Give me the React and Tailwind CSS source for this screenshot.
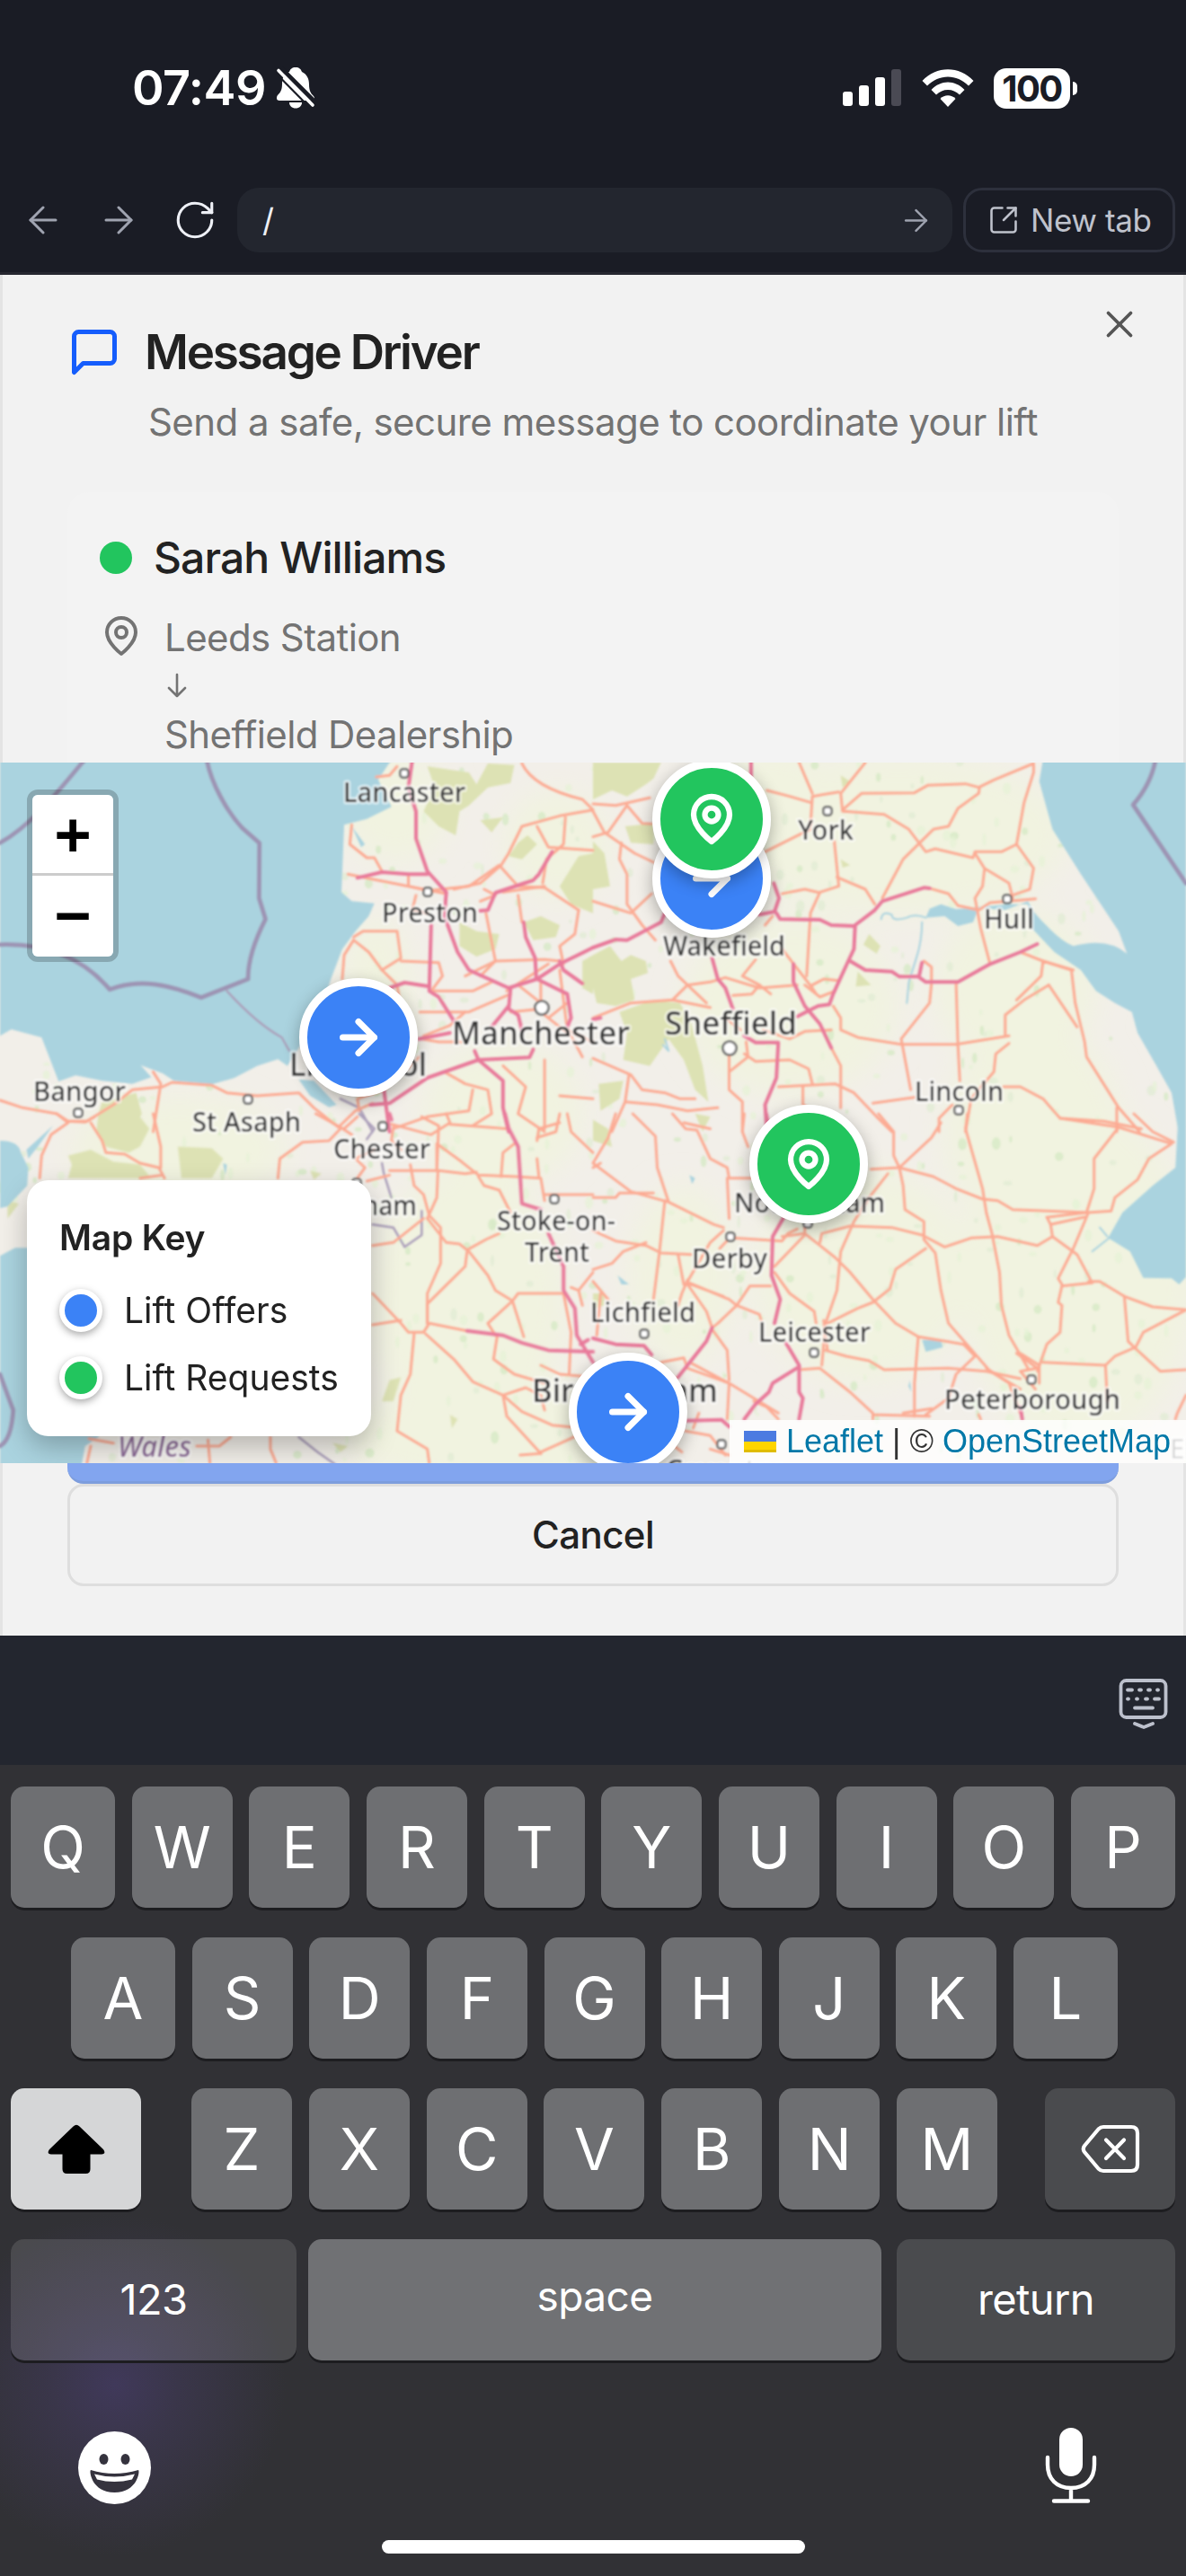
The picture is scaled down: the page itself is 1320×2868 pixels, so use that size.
import React from "react";
import { ArrowLeft, ArrowRight, RotateCw, SquareArrowOutUpRight, X } from "lucide-react";

/* ---------- map data: four sheets, each drawn on its own 1568 x 1260 grid ---------- */

const SHEETS = [
  {
    id: "nw",
    place: "translate(0 840) scale(0.42092 0.33333)",
    forest: [
      "M1130 40 L1240 60 1260 100 1290 30 1360 35 1350 95 1290 110 1240 170 1215 190 1205 270 1160 240 1120 190 1150 110Z",
      "M1395 270 L1420 300 1380 350 1345 340 1370 295Z",
      "M1215 560 L1260 590 1320 600 1310 650 1260 675 1215 640Z",
      "M1568 330 L1530 340 1480 440 1510 500 1568 530Z",
      "M1385 560 L1430 540 1480 570 1470 610 1410 620Z",
      "M270 1160 L360 1130 375 1200 350 1260 255 1260 260 1200Z",
      "M1540 690 L1568 670 1568 800 1540 780Z",
      "M1270 220 L1330 210 1300 260Z",
    ],
    water: [
      "M0 0 L1060 0 1030 27 1000 85 1035 175 970 215 910 235 903 460 930 490 990 497 975 540 940 590 905 650 875 750 850 850 800 960 760 1040 735 1018 680 1040 620 1080 560 1102 460 1090 430 1065 372 1038 400 1078 350 1100 270 1090 200 1072 155 1092 130 1010 110 945 30 918 0 940Z",
      "M790 1085 L830 1090 890 1170 870 1178 820 1140Z",
      "M930 240 L965 300 955 310Z",
    ],
    border: ["M222 20 C150 130 80 240 0 295", "M547 20 C560 100 600 190 640 245 L686 296 685 480 702 550 C670 630 655 690 656 750 L532 812 C450 770 370 745 290 785 C220 680 120 630 0 635"],
    thinBorder: ["M600 790 Q680 900 745 945 L765 990", "M900 1150 L950 1180 985 1260"],
    motorway: [
      "M1090 20 L1080 110 1100 190 1100 280 1130 390 1180 460 1175 540 1210 660 1240 720 1345 780 1420 750 1500 800 1510 880 1500 910",
      "M945 412 L1010 393 1080 400 1130 400",
      "M1140 570 L1135 790 1160 810 1200 890",
      "M1460 325 L1425 400 1410 420 1310 462 1290 520 1270 522",
      "M1385 560 L1390 610 1415 680 1418 750",
      "M1420 750 L1480 700 1568 645",
      "M1480 690 L1490 720 1540 765",
      "M1350 780 L1345 850 1370 870 1380 920",
      "M1108 950 L1190 930",
      "M1030 780 L1070 762 1135 775",
      "M980 1170 L1030 1165 1130 1080 1265 1020 1400 1012 1410 985",
      "M1255 990 L1265 1020 1330 1090 1330 1180 1345 1260",
      "M1015 1120 L1030 1260",
      "M1300 910 L1345 840",
    ],
    road: [
      "M1380 30 Q1410 110 1540 150 L1568 185 1480 205 1380 240 1345 330 1325 370 1270 430 1200 450",
      "M930 235 L925 300 970 345 990 345 1010 390",
      "M920 400 L960 410 1080 440 1180 465",
      "M1080 400 L1080 440 1130 455 1240 440 1320 370 1370 440 1440 445 1530 520",
      "M1420 240 L1450 310 1568 320",
      "M1495 210 L1490 300 1445 350 1435 430",
      "M995 75 L1030 70 1050 40",
      "M1330 460 L1440 440",
      "M935 610 L960 590 1050 590 1060 680 1010 720 975 660 935 620 910 670 905 750",
      "M1060 690 L1160 695 1170 740 1140 790 1250 790 1300 760",
      "M1010 720 L1050 770 1060 850",
      "M1285 530 L1310 690 1270 740",
      "M1370 470 L1380 560",
      "M1230 740 L1310 690 1440 685 1480 690",
      "M1110 860 L1240 860 1350 800",
      "M1120 940 L1190 905 1230 860",
      "M0 1155 L60 1180 150 1200 180 1225 230 1225 300 1170 350 1120 430 1110 455 1095 560 1105 600 1130 680 1140 790 1130 830 1180 895 1245 940 1190 985 1165",
      "M405 1060 L425 1100 405 1260",
      "M950 1190 L945 1150 1015 1120 1110 1010",
      "M1115 950 L1160 960 1220 960",
      "M1175 1060 L1230 1100 1290 1120 1300 1200 1250 1240",
      "M1330 1040 L1390 1110 1370 1200 1440 1260",
      "M1440 1020 L1440 1250",
      "M1040 1250 L1130 1210 1240 1190 1250 1120",
      "M1430 760 L1430 860 1450 880 1500 830",
      "M1350 860 L1430 850 M1370 770 L1430 830",
      "M1340 790 L1450 700 M1480 720 L1500 920 1568 960",
      "M1450 880 L1510 940 1540 1010",
      "M1100 470 L1090 520 1130 530",
      "M1280 450 L1310 470 1270 490",
      "M1480 1140 L1568 1150",
      "M1530 520 L1520 600 1480 640 1490 700",
    ],
  },
  {
    id: "ne",
    place: "translate(660 840) scale(0.42092 0.33333)",
    forest: [
      "M0 27 L180 27 160 80 140 100 90 140 50 120 0 150Z",
      "M85 240 L160 230 160 300 100 295Z",
      "M0 290 L30 330 45 440 0 450Z",
      "M0 670 L45 640 75 690 100 670 140 690 145 730 100 750 110 820 60 840 10 830 0 780Z",
      "M70 860 L160 820 230 830 260 900 290 1040 305 1160 270 1120 240 1020 200 950 150 1040 80 1020 90 930Z",
      "M730 600 L760 640 750 665 715 635Z",
      "M700 725 L735 770 695 775Z",
      "M655 70 L680 90 660 110Z M655 350 L680 370 660 378Z",
      "M15 1100 L80 1090 70 1150 20 1190Z",
    ],
    water: [
      "M1192 0 L1180 90 1215 250 1290 400 1390 590 1412 665 Q1360 610 1270 640 Q1230 620 1165 525 L1150 490 1090 520 1020 512 1005 560 965 573 930 540 880 545 890 515 920 500 960 517 1100 500 1150 500 1160 580 1220 660 1290 720 1330 790 1380 830 1425 860 1440 930 1490 1040 1530 1130 1548 1260 1568 1260 1568 0Z",
    ],
    river: ["M880 545 Q850 530 830 545 Q790 560 790 535 Q765 520 762 550 M870 560 Q870 620 855 680 L835 760 830 830", "M190 950 L200 990 185 970"],
    border: ["M1487 20 Q1475 100 1428 168 L1568 430"],
    motorway: [
      "M0 645 L60 618 90 620 180 560 190 530",
      "M418 20 L418 110",
      "M440 535 L480 525 492 480 478 430 M485 530 L495 550 600 552 630 570 690 573 745 520 765 490 875 445 890 447",
      "M693 575 L690 650 675 690 635 800 625 835 595 840 540 875",
      "M680 690 L720 720 790 725 810 742 862 742 870 695 M860 742 L880 760 965 760 1050 700 1130 660 1175 633",
      "M315 680 L330 750 350 780 370 850 M400 940 L430 962 490 962 485 1080 455 1170 460 1260",
      "M530 700 L530 760 560 840 600 900 630 980",
      "M0 885 L20 880",
    ],
    road: [
      "M545 27 L580 130 M720 27 L655 130 660 190 670 190",
      "M650 125 L580 140 575 240 M660 185 L710 130 850 128 885 103 985 98 1020 110 1060 85 1165 30 1165 60 1140 160 1120 300 1165 380 1155 450 1110 470",
      "M1022 110 L1020 130 965 180 940 240 900 250 820 350 765 480",
      "M665 190 L770 200 835 250 880 325 905 315 1005 345 1010 325 1080 325 1120 300",
      "M1010 330 L1035 380 1100 430 1110 480 M1035 385 L1030 440 1010 480 1025 580 1050 700",
      "M885 445 L940 465 965 505 1020 520 1050 495 1170 482",
      "M460 120 L520 140 575 160",
      "M455 325 L550 265 575 250",
      "M638 290 L650 440 600 460 575 530 565 740 M500 465 L560 450 600 462",
      "M645 410 L720 450 745 500",
      "M0 165 L60 170 150 145 M0 190 L30 260 110 330 160 360 M0 275 L40 260 90 170 130 230 155 232",
      "M75 295 L70 350 90 400 90 500 130 570 165 620 M0 490 L50 510 100 530 155 465",
      "M205 690 L225 740 300 830 M430 685 L395 740 440 770 420 800 370 805",
      "M310 760 L350 745 440 780 540 770 M0 880 L100 830 210 820 250 770 310 760 M210 820 L310 845",
      "M500 650 L580 780 590 800 M560 770 L600 810 640 790 M580 770 L610 750 650 755",
      "M455 570 L475 540",
      "M0 1015 L100 1070 130 1120 190 1130 230 1150 270 1150 M95 1070 L85 1160 50 1260 M85 1160 L170 1170 250 1190 330 1180",
      "M360 1005 L360 1120 395 1160 395 1260 M405 960 L410 1010 360 1060 M400 1000 L430 1025 520 1020 570 1050 580 1100",
      "M450 920 L520 950 560 925 630 920",
      "M635 840 L655 880 655 920 700 945 815 968 960 968 1100 940 M630 980 L655 1040 655 1180",
      "M895 765 L890 830 815 950 840 1120 M960 760 L965 970 970 1090",
      "M875 690 L895 710 895 760",
      "M490 1110 L640 1100 690 1130 750 1210 790 1260 M740 1165 L850 1145",
      "M555 1110 L555 1170 600 1200",
      "M1090 940 L1090 870 1140 820 1205 770 M1120 820 L1185 740 1190 690 1265 720 1275 830 1300 960 1305 1010 1390 1180 1445 1260",
      "M1205 770 L1280 910 M1130 660 L1190 690 1270 720",
      "M1100 965 L1065 1000 1060 1060 1000 1150 985 1260 M950 1170 L915 1215 915 1260",
      "M1085 1110 L1130 1110 1190 1150 1235 1215 1350 1225 1450 1250 M1385 1180 L1385 1260",
      "M350 880 L390 920 M470 800 L440 770",
      "M240 1230 L310 1250",
    ],
  },
  {
    id: "sw",
    place: "translate(0 1240) scale(0.42092 0.33333)",
    forest: [
      "M265 20 L370 10 395 50 370 110 340 130 280 110 255 60Z",
      "M180 140 L240 120 300 160 370 170 400 215 180 215 190 170Z",
      "M470 110 L560 115 590 150 560 215 480 215Z",
      "M1030 890 L1060 880 1040 960 1010 960Z",
      "M20 290 L50 300 20 350Z M820 190 L850 200 830 220Z",
      "M1190 1005 L1210 1020 1195 1050Z M880 1100 L920 1110 900 1130Z",
    ],
    water: [
      "M0 90 Q50 90 55 130 L75 180 72 240 20 310 0 315Z",
      "M0 475 L40 448 75 448 300 900 260 1080 225 1110 215 1180 0 1180Z",
      "M140 40 L70 120 75 150 100 110Z M590 165 L600 170 596 205Z",
    ],
    border: ["M0 870 Q20 940 35 990 Q30 1090 0 1110"],
    thinBorder: ["M950 0 L990 50 970 85 M1010 165 L1015 200 1035 280", "M985 370 L1040 380 1070 445 1115 405 1115 325", "M790 1080 L840 1130 885 1170"],
    motorway: [
      "M1335 0 L1345 50 1370 110 1380 300 1430 320 M1450 400 L1490 510 1490 590 1520 650 1525 740 1568 830",
      "M1235 725 L1330 740 1380 765 1450 790 1568 795",
      "M1030 0 L1035 20 M1555 755 L1535 770",
    ],
    road: [
      "M150 0 L175 25 225 28 250 10 M240 30 L270 90 280 130 330 135 370 165 420 180 435 215 M405 0 L425 110 425 180 M180 30 L135 70 110 140 105 215 M370 215 L430 205",
      "M735 215 L740 150 800 95 870 90 900 50 M835 0 L900 45 930 70 M910 50 L945 10",
      "M1035 35 L1140 70 1190 30 1180 0 M1190 35 L1290 45 1340 50 M1040 45 L1035 90 1060 120",
      "M945 215 L965 180 940 150 990 120 M1030 190 L1160 190 1230 200 1260 195 M970 225 L1030 205",
      "M1085 170 L1095 240 1120 270 1135 340 1165 380 1165 500 1130 600 1130 700",
      "M1158 190 L1155 280 1130 350 M1115 10 L1160 40 1155 190 1155 100 1220 160 1265 205 1365 210 1430 215 1440 290",
      "M1130 350 L1180 430 1215 435 1240 460 1290 540 1310 590 1355 625 M1235 455 L1285 420 1320 400 M1235 460 L1230 510 1190 560 1130 635 1130 700",
      "M985 440 L1040 430 1120 350 M985 600 L1060 700 1080 730 1120 730 1135 700 1235 725 M985 705 L1060 690",
      "M1355 625 L1290 700 1310 740 M1355 625 L1370 600 1490 600 M1355 625 L1385 745",
      "M1315 740 L1305 820 1360 870 1440 900",
      "M1095 735 L1085 870 1060 940 1050 1060 1130 1120 1135 1166 M1125 735 L1200 820 1250 895 1330 940 1340 1010 1430 1135",
      "M1330 940 L1390 915 1430 940 1440 990 M1330 940 L1380 995 1460 1040 1540 1050",
      "M1430 1135 L1375 1140 M1430 1130 L1500 1090 1550 1060",
      "M1265 210 L1280 240 1320 255 1350 330 M1325 210 L1330 130 1360 100",
      "M1420 150 L1425 210 M1420 90 L1425 50 1480 30",
      "M1505 870 L1510 730 1490 600 M1480 870 L1568 880 M1480 870 L1430 840 M1440 270 L1568 270",
      "M1500 0 L1510 60 1568 130 M1480 0 L1470 60 1420 80",
      "M235 1085 L300 1100 M240 1110 L230 1166 M550 1090 L555 1166 M520 1110 L580 1110 610 1080 M715 1080 L715 1120 730 1166",
      "M1510 580 L1530 590 1568 530 M1530 590 L1540 640",
    ],
  },
  {
    id: "se",
    place: "translate(660 1240) scale(0.42092 0.33333)",
    forest: ["M0 20 L40 50 50 110 0 90Z", "M270 0 L310 10 290 60Z", "M0 600 L30 600 30 640 0 650Z"],
    water: [
      "M1548 0 L1540 180 1480 240 1400 330 1362 415 1420 460 1455 548 1530 550 1550 570 1568 545 1568 0Z",
      "M870 755 L920 755 925 780 880 795Z",
      "M255 205 L270 215 262 235Z M65 540 L95 570 75 570Z M838 890 L842 930 834 910Z",
    ],
    river: ["M1365 415 L1320 460 M1340 380 L1360 410"],
    motorway: [
      "M458 0 L462 25 M505 345 L475 410 472 540 495 620 480 700 M510 765 L545 840 545 930 555 950 545 1020",
      "M545 845 L475 900 465 930 430 970 400 1020",
      "M0 750 L60 770 135 775 155 805 M315 715 L300 760 225 880",
      "M1130 980 L1135 1020 M250 1025 L340 1022 360 1045",
    ],
    road: [
      "M60 0 L40 80 0 165 100 260 200 295 320 370 345 380 M105 0 L165 75 170 180 200 295",
      "M0 180 L20 165 M0 280 L60 280 70 265 160 265 M210 0 L245 50 275 55 310 150 355 180 360 215 420 215",
      "M355 215 L360 350 M190 290 L175 470 160 620 M345 390 L310 430 250 560 M0 390 L60 425 140 440 180 465 260 470",
      "M370 415 L500 425 515 400 540 385 M365 410 L335 450 M0 520 L50 500 80 460 140 430 M225 470 L240 570 260 570",
      "M250 555 L235 600 225 640 M255 565 L360 620 380 640 330 700 315 715 M260 570 L345 610 M250 570 L300 660 315 715",
      "M470 575 L415 575 380 640 440 670 445 690",
      "M400 0 L395 60 410 110 M755 0 L795 60 795 140 810 180 M920 30 L895 80 810 180 735 185",
      "M810 180 L820 240 825 320 875 360 875 420 905 465 920 590 940 700 1050 860 1130 920",
      "M810 180 L900 210 960 250 1030 285 1070 290 1110 320 1310 330",
      "M990 0 L985 50 1030 250 1040 330 1055 400 1075 530 1080 640 1100 740 1150 850",
      "M780 200 L730 280 690 360 655 460 645 590 615 700 605 840",
      "M560 345 L560 400 600 440 640 480 680 530 740 620 800 700 860 745 980 770",
      "M560 405 L480 510 M600 430 L605 400 680 375 790 380 870 405 930 445 1000 415 1070 410 1175 440 1215 410 1210 370 1200 345",
      "M560 400 L500 410",
      "M880 450 L800 520 785 585 740 630 700 650 620 700",
      "M480 530 L520 600 585 660 590 700 M610 690 L620 790 M615 790 L670 810 730 825 770 855 940 850 1040 860 1130 885",
      "M545 855 L600 850 680 930 740 1000 M740 1020 L740 1005 890 1010",
      "M860 745 L850 900 850 1010 M980 770 L1010 810 960 870 940 950 880 1005 M820 1000 L895 985",
      "M1235 15 L1390 45 1530 100 1470 150 1440 220 1380 280 1370 325 1310 330 1270 450 1230 550 1240 570",
      "M1430 0 L1480 60 1535 95 M1390 45 L1325 150 1325 250 1305 330 1205 345 M1210 370 L1300 345 M1215 410 L1280 470 1320 565 1240 575",
      "M1240 575 L1230 630 1240 640 1235 730 1200 770 1175 860 M1310 560 L1340 560 1405 610 1480 645 1568 655 1455 730 1435 780 1380 810 1355 840 1190 830",
      "M1405 610 L1415 760 1435 785 1500 860 1568 855 M1355 840 L1360 960",
      "M1120 800 L1175 850 1130 860 1170 920 M1130 800 L1180 840 1180 900 M1040 850 L1100 900 1130 1000",
      "M180 830 L240 815 250 850 360 900 490 1000 M255 830 L360 900 355 1020",
      "M225 880 L150 920 M315 720 L355 790 360 890 M425 960 L460 980 490 1020 M245 1060 L310 1075 350 1140",
      "M20 600 L10 740 M0 560 L40 620",
      "M1020 1005 L1025 1020 M1568 940 L1545 1000 1540 1020",
      "M200 1095 L235 1130 M280 1000 L265 1050 M310 1120 L360 1140",
    ],
  },
];

const TOWNS = [
  [450, 861], [476, 993], [87, 1239], [276, 1224], [426, 1254], [397, 1317], [617, 1335], [921, 903],
  [1121, 1001], [1067, 1236], [813, 1377], [717, 1485], [906, 1506], [1148, 1536], [803, 1608], [899, 1362],
];

const CITIES = [[603, 1122], [812, 1167]];

/* name, left, baseline, width, size */
const LABELS = [
  ["Lancaster", 382, 893, 136, 31],
  ["Preston", 425, 1027, 107, 31],
  ["Manchester", 503, 1163, 198, 36],
  ["Liverpool", 322, 1198, 153, 36],
  ["Bangor", 37, 1226, 103, 31],
  ["St Asaph", 214, 1260, 121, 31],
  ["Chester", 371, 1290, 108, 31],
  ["Wrexham", 335, 1353, 129, 31],
  ["Stoke-on-", 553, 1370, 132, 31],
  ["Trent", 584, 1405, 72, 31],
  ["Birmingham", 592, 1561, 207, 36],
  ["York", 888, 935, 62, 31],
  ["Wakefield", 738, 1064, 136, 31],
  ["Hull", 1095, 1034, 56, 31],
  ["Sheffield", 740, 1152, 147, 36],
  ["Lincoln", 1018, 1226, 99, 31],
  ["Nottingham", 817, 1350, 168, 31],
  ["Derby", 770, 1412, 84, 31],
  ["Lichfield", 657, 1472, 117, 31],
  ["Leicester", 844, 1494, 125, 31],
  ["Peterborough", 1051, 1569, 196, 31],
  ["Coventry", 741, 1647, 128, 31],
  ["Ely", 1302, 1624, 40, 31],
];

/* Deterministic scatter of small woods over the land. */
const WOODS = (() => {
  let s = 7;
  const next = () => (s = (s * 16807) % 2147483647) / 2147483647;
  return Array.from({ length: 620 }, () => [next() * 1320, 849 + next() * 780, 1.5 + next() * 3.5, 2 + next() * 5, next()]);
})();

const FIELDS = [
  [1000, 930, 190, 90], [880, 1120, 120, 100], [1130, 1100, 90, 90], [960, 1420, 120, 120], [1200, 1420, 130, 190],
  [440, 900, 60, 60], [520, 1450, 110, 150], [560, 1240, 90, 80], [420, 1110, 40, 90], [200, 1280, 120, 60],
  [560, 1600, 180, 60], [760, 1420, 60, 100], [1150, 1260, 100, 120], [860, 870, 60, 40], [620, 940, 60, 60],
];

function strokes(list, stroke, width) {
  return (list || []).map((d) => (
    <path key={d} d={d} fill="none" stroke={stroke} strokeWidth={width} strokeLinejoin="round" strokeLinecap="round" vectorEffect="non-scaling-stroke" />
  ));
}

function MapTiles() {
  return (
    <svg className="block h-full w-full" viewBox="0 849 1320 780">
      <defs>
        <filter id="soft"><feGaussianBlur stdDeviation="16" /></filter>
        <filter id="tile"><feGaussianBlur stdDeviation="0.8" /></filter>
      </defs>
      <rect y="849" width="1320" height="780" fill="#f2efe9" />
      <g filter="url(#soft)">
        {FIELDS.map(([x, y, rx, ry]) => <ellipse key={`${x}-${y}`} cx={x} cy={y} rx={rx} ry={ry} fill="#f1f3e0" />)}
      </g>
      <g filter="url(#tile)">
        {WOODS.map(([x, y, rx, ry, t], i) => (
          <ellipse key={i} cx={x} cy={y} rx={rx} ry={ry} fill={t > 0.75 ? "#d3e8c2" : t > 0.25 ? "#e6f2d6" : "#e0ebd3"} opacity="0.7" />
        ))}
        {SHEETS.map((s) => (
          <g key={s.id} transform={s.place}>
            {s.forest.map((d) => <path key={d} d={d} fill="#dde2b4" />)}
          </g>
        ))}
        {SHEETS.map((s) => (
          <g key={s.id} transform={s.place}>
            {s.water.map((d) => <path key={d} d={d} fill="#aad3df" />)}
            {strokes(s.river, "#aad3df", 2)}
            {strokes(s.border, "#9d94b4", 5)}
            {strokes(s.thinBorder, "#ab9fba", 2.5)}
          </g>
        ))}
        {SHEETS.map((s) => (
          <g key={s.id} transform={s.place}>{strokes(s.road, "#fcaa93", 3)}</g>
        ))}
        {SHEETS.map((s) => (
          <g key={s.id} transform={s.place}>{strokes(s.motorway, "#e8799a", 4)}</g>
        ))}
        {TOWNS.map(([x, y]) => <rect key={`${x}-${y}`} x={x - 4.5} y={y - 4.5} width="9" height="9" rx="3" fill="#fff" stroke="#666" strokeWidth="2.4" />)}
        {CITIES.map(([x, y]) => <circle key={`${x}-${y}`} cx={x} cy={y} r="7.5" fill="#fff" stroke="#666" strokeWidth="2.6" />)}
      </g>
      <g filter="url(#tile)" fontFamily="'Noto Sans', sans-serif" fontWeight="500" fill="#363636" stroke="#ffffff" strokeOpacity="0.6" strokeWidth="5" strokeLinejoin="round" paintOrder="stroke">
        {LABELS.map(([name, x, y, w, size]) => (
          <text key={name} x={x} y={y} textLength={w} lengthAdjust="spacingAndGlyphs" fontSize={size}>{name}</text>
        ))}
        <text x="131" y="1622" textLength="82" lengthAdjust="spacingAndGlyphs" fontSize="32" fontStyle="italic" fill="#8d6a98">Wales</text>
      </g>
    </svg>
  );
}

/* ---------- small pieces ---------- */

function Pin({ className, strokeWidth = 2 }) {
  return (
    <svg className={className} viewBox="0 0 24 24" fill="none" stroke="currentColor" strokeWidth={strokeWidth} strokeLinecap="round" strokeLinejoin="round">
      <path d="M20 10c0 6-8 12-8 12s-8-6-8-12a8 8 0 0 1 16 0Z" />
      <circle cx="12" cy="10" r="3" />
    </svg>
  );
}

function Marker({ x, y, kind }) {
  return (
    <div
      className={`absolute flex h-[132px] w-[132px] -translate-x-1/2 -translate-y-1/2 items-center justify-center rounded-full border-[9px] border-white text-white shadow-[0_6px_18px_rgba(0,0,0,0.3)] ${kind === "offer" ? "bg-[#3b82f6]" : "bg-[#22c55e]"}`}
      style={{ left: x, top: y }}
    >
      {kind === "offer" ? <ArrowRight size={60} strokeWidth={2.8} /> : <Pin className="h-[60px] w-[60px]" strokeWidth={2.5} />}
    </div>
  );
}

function StatusBar() {
  return (
    <div className="flex h-[183px] items-start justify-between pl-[147px] pr-[121px] pt-[68px] text-white">
      <div className="flex h-[60px] items-center">
        <span className="w-[152px] whitespace-nowrap text-[54px] font-semibold leading-[60px] tracking-[-0.5px]">07:49</span>
        <svg className="ml-[8px] h-[48px] w-[44px]" viewBox="0 0 44 48">
          <path d="M22 1c4 0 6 2 7 5 6 3 8 8 8 14 0 7 2 10 5 13 2 3 1 5-1 5H4c-3 0-4-3-2-6 4-4 5-7 5-13 0-7 3-11 8-13 1-3 3-5 7-5Z" fill="#fff" />
          <path d="M15 40h14c0 4-3 6.500-7 6.500S15 44 15 40Z" fill="#fff" />
          <path d="M5 1 L45 41" stroke="#1a1c25" strokeWidth="5" />
          <path d="M3 4.500 L41 43" stroke="#fff" strokeWidth="3.600" strokeLinecap="round" />
          <path d="M0.500 8 L38 46" stroke="#1a1c25" strokeWidth="2.200" />
        </svg>
      </div>
      <div className="flex h-[60px] items-center">
        <svg className="h-[42px] w-[66px]" viewBox="0 0 66 42">
          <rect x="0" y="25" width="11" height="16" rx="3" fill="#fff" />
          <rect x="18" y="18" width="11" height="23" rx="3" fill="#fff" />
          <rect x="36" y="9" width="11" height="32" rx="3" fill="#fff" />
          <rect x="54" y="0" width="11" height="41" rx="3" fill="#4a4a54" />
        </svg>
        <svg className="ml-[22px] h-[44px] w-[58px]" viewBox="0 0 58 44">
          <path d="M0.500 14 C16 -3 42 -3 57.500 14 L52 19.500 C39 6 19 6 6 19.500Z" fill="#fff" />
          <path d="M10.500 24 C21 12.500 37 12.500 47.500 24 L42 29.500 C35 22 23 22 16 29.500Z" fill="#fff" />
          <path d="M20.500 34 C25 29 33 29 37.500 34 L29 43Z" fill="#fff" />
        </svg>
        <div className="ml-[22px] flex h-[45px] w-[85px] items-center justify-center rounded-[14px] bg-white text-[40px] font-bold leading-[45px] tracking-[-1.5px] text-[#1a1c25]">100</div>
        <div className="ml-[3px] h-[15px] w-[5px] rounded-r-full bg-white" />
      </div>
    </div>
  );
}

function Toolbar() {
  return (
    <div className="flex h-[123px] items-start border-b-[3px] border-[#262730] pl-[24px] pt-[26px]">
      <div className="flex h-[72px] items-center text-[#9fa3b0]">
        <ArrowLeft size={48} strokeWidth={1.5} />
        <ArrowRight className="ml-[36px]" size={48} strokeWidth={1.5} />
        <RotateCw className="ml-[36px] text-[#eef0f6]" size={50} strokeWidth={1.5} />
      </div>
      <div className="ml-[22px] flex h-[72px] w-[796px] items-center justify-between rounded-[24px] bg-[#23262f] pl-[28px] pr-[21px]">
        <span className="text-[36px] leading-[72px] text-[#eef0f6]">/</span>
        <ArrowRight className="text-[#9fa3b0]" size={39} strokeWidth={1.5} />
      </div>
      <div className="ml-[12px] flex h-[72px] w-[236px] items-center rounded-[21px] border-[3px] border-[#2d303c] pl-[24px] text-[#bfc2cc]">
        <SquareArrowOutUpRight size={36} strokeWidth={1.7} />
        <span className="ml-[12px] whitespace-nowrap text-[35px] leading-[66px] tracking-[-0.4px]">New tab</span>
      </div>
    </div>
  );
}

function MessagePanel() {
  return (
    <section className="relative h-[543px] overflow-hidden border-x-[3px] border-[#e4e4e4] bg-[#f2f2f2] px-[72px] pt-[51px]">
      <X className="absolute right-[46px] top-[30px] text-[#555]" size={50} strokeWidth={1.8} />
      <div className="flex h-[70px] items-center">
        <svg className="h-[60px] w-[60px] text-[#155dfc]" viewBox="0 0 24 24" fill="none" stroke="currentColor" strokeWidth="2" strokeLinecap="round" strokeLinejoin="round">
          <path d="M21 15a2 2 0 0 1-2 2H7l-4 4V5a2 2 0 0 1 2-2h14a2 2 0 0 1 2 2z" />
        </svg>
        <h1 className="ml-[26px] whitespace-nowrap text-[53px] font-semibold leading-[70px] tracking-[-2.250px] text-[#222]">Message Driver</h1>
      </div>
      <p className="mt-[13px] text-center text-[42px] leading-[60px] tracking-[-0.550px] text-[#737373]">Send a safe, secure message to coordinate your lift</p>
      <div className="mt-[48px] h-[420px] rounded-[24px] bg-[#f3f3f3] px-[36px] pt-[42px]">
        <div className="flex h-[62px] items-center">
          <div className="h-[36px] w-[36px] rounded-full bg-[#22c55e]" />
          <div className="ml-[24px] text-[48px] font-medium leading-[62px] tracking-[-0.9px] text-[#222]">Sarah Williams</div>
        </div>
        <div className="mt-[28px] flex text-[#737373]">
          <Pin className="mt-[4px] h-[48px] w-[48px] shrink-0" />
          <div className="ml-[24px] text-[42px] tracking-[-0.6px]">
            <div className="leading-[60px]">Leeds Station</div>
            <svg className="my-[2px] ml-[3px] h-[44px] w-[22px]" viewBox="0 0 22 44" fill="none" stroke="currentColor" strokeWidth="2.600" strokeLinecap="round" strokeLinejoin="round">
              <path d="M11 9v24M2 24l9 9 9-9" />
            </svg>
            <div className="leading-[60px]">Sheffield Dealership</div>
          </div>
        </div>
      </div>
    </section>
  );
}

function LegendRow({ color, children }) {
  return (
    <div className="flex h-[60px] items-center">
      <div className={`h-[48px] w-[48px] rounded-full border-[6px] border-white shadow-[0_3px_8px_rgba(0,0,0,0.35)] ${color}`} />
      <span className="ml-[24px] whitespace-nowrap text-[39px] leading-[60px] text-[#222]">{children}</span>
    </div>
  );
}

function LiftMap() {
  return (
    <section className="relative h-[780px] overflow-hidden bg-[#f2efe9]">
      <MapTiles />
      <Marker x={399} y={306} kind="offer" />
      <Marker x={792} y={129} kind="offer" />
      <Marker x={792} y={63} kind="request" />
      <Marker x={900} y={447} kind="request" />
      <Marker x={699} y={723} kind="offer" />

      <div className="absolute left-[30px] top-[30px] rounded-[12px] border-[6px] border-black/20 bg-clip-padding text-center font-bold text-black [font-family:'DejaVu_Sans_Mono','Liberation_Mono',monospace]">
        <div className="h-[90px] w-[90px] rounded-t-[6px] border-b-[3px] border-[#ccc] bg-white text-[66px] leading-[87px]">+</div>
        <div className="h-[90px] w-[90px] rounded-b-[6px] bg-white text-[66px] leading-[88px]">−</div>
      </div>

      <div className="absolute left-[30px] top-[465px] h-[285px] w-[383px] rounded-[24px] bg-white px-[36px] pt-[34px] shadow-[0_12px_30px_rgba(0,0,0,0.25)]">
        <div className="text-[39px] font-semibold leading-[60px] tracking-[-0.2px] text-[#222]">Map Key</div>
        <div className="mt-[21px] flex flex-col gap-[15px]">
          <LegendRow color="bg-[#3b82f6]">Lift Offers</LegendRow>
          <LegendRow color="bg-[#22c55e]">Lift Requests</LegendRow>
        </div>
      </div>

      <div className="absolute bottom-0 right-0 flex h-[48px] w-[508px] items-center whitespace-nowrap bg-white/80 pl-[16px] text-[36px] leading-[48px] text-[#333] [font-family:'Liberation_Sans',Arial,sans-serif]">
        <div className="mr-[11px] h-[24px] w-[36px] bg-[linear-gradient(#4c7be1_50%,#ffd500_50%,#ffd500_88%,#e0bc00_88%)]" />
        <span className="text-[#0078a8]">Leaflet</span>
        <span className="mx-[10px]">|</span>
        <span className="mr-[10px]">©</span>
        <span className="text-[#0078a8]">OpenStreetMap</span>
      </div>
    </section>
  );
}

function PanelFooter() {
  return (
    <section className="h-[192px] border-x-[3px] border-[#e4e4e4] bg-[#f2f2f2] px-[72px]">
      <div className="h-[23px] rounded-b-[18px] border-b-[3px] border-[#7d9ddd] bg-[#82a5ef]" />
      <button className="block h-[114px] w-full rounded-[18px] border-[3px] border-[#dedede] text-[42px] font-medium leading-[108px] tracking-[-0.6px] text-[#222]">Cancel</button>
    </section>
  );
}

function AccessoryBar() {
  return (
    <div className="flex h-[144px] items-start justify-end bg-[#23262f] pr-[19px] pt-[47px]">
      <svg className="h-[58px] w-[56px]" viewBox="0 0 56 58" fill="none" stroke="#bcc0cc" strokeWidth="3.800" strokeLinecap="round" strokeLinejoin="round">
        <rect x="2.500" y="3" width="50" height="41" rx="6" />
        <path d="M10 13.500h5M23 13.500h2M33 13.500h2M43 13.500h1M10 23.500h1M20 23.500h1M30 23.500h2M40 23.500h5M18 33.500h20M18 51l10 4 10-4" />
      </svg>
    </div>
  );
}

const KEY = "flex h-[135px] shrink-0 items-center justify-center rounded-[15px] text-white shadow-[0_3px_0_#1d1d20]";

function Letters({ keys, wideFirst, wideLast }) {
  return keys.split("").map((k, i) => (
    <div
      key={k}
      className={`${KEY} bg-[#6e6f72] text-[65px] leading-[135px] ${(wideFirst && i === 0) || (wideLast && i === keys.length - 1) ? "w-[116px]" : "w-[112px]"}`}
    >
      {k}
    </div>
  ));
}

function Keyboard() {
  return (
    <section className="h-[903px] bg-[#313135] bg-[radial-gradient(circle_at_128px_690px,#40395a_0px,#3a364a_70px,transparent_190px)] pt-[24px]">
      <div className="flex justify-between pl-[12px] pr-[12px]">
        <Letters keys="QWERTYUIOP" wideFirst wideLast />
      </div>
      <div className="mt-[33px] flex justify-between pl-[79px] pr-[76px]">
        <Letters keys="ASDFGHJKL" wideFirst wideLast />
      </div>
      <div className="mt-[33px] flex pl-[12px]">
        <div className="flex h-[135px] w-[145px] items-center justify-center rounded-[15px] bg-[#d5d6d7] shadow-[0_3px_0_#1d1d20]">
          <svg className="h-[56px] w-[64px]" viewBox="0 0 64 56">
            <path d="M28.500 2.500 Q32 -1 35.500 2.500 L62 28 Q65.500 33 60 33.500 H47.500 V50 Q47.500 55 42.500 55 H21.500 Q16.500 55 16.500 50 V33.500 H4 Q-1.500 33 2 28 Z" fill="#000" />
          </svg>
        </div>
        <div className="ml-[56px] mr-[53px] flex w-[897px] justify-between">
          <Letters keys="ZXCVBNM" />
        </div>
        <div className={`${KEY} w-[145px] bg-[#4a4b4e]`}>
          <svg className="h-[56px] w-[66px]" viewBox="0 0 66 56" fill="none" stroke="#fff" strokeWidth="4.200" strokeLinecap="round" strokeLinejoin="round">
            <path d="M25 3 H56 Q63 3 63 10 V45 Q63 52 56 52 H25 Q22 52 19.500 49.500 L4 31 Q1.500 27.500 4 24 L19.500 5.500 Q22 3 25 3Z" />
            <path d="M28 17.500 L48 38 M48 17.500 L28 38" />
          </svg>
        </div>
      </div>
      <div className="mt-[33px] flex pl-[12px] text-[47px] tracking-[-0.6px]">
        <div className={`${KEY} w-[318px] bg-[#ffffff1f]`}>123</div>
        <div className={`${KEY} ml-[13px] w-[638px] bg-[#707174] pb-[8px] text-[46px]`}>space</div>
        <div className={`${KEY} ml-[17px] w-[310px] bg-[#4a4b4e]`}>return</div>
      </div>
      <div className="mt-[72px] flex items-center justify-between pl-[85px] pr-[99px]">
        <svg className="h-[90px] w-[84px]" viewBox="0 0 84 90">
          <circle cx="42.500" cy="47.500" r="40.500" fill="#fff" />
          <ellipse cx="30.500" cy="38" rx="5" ry="6" fill="#35333e" />
          <ellipse cx="54.500" cy="38" rx="5" ry="6" fill="#35333e" />
          <path d="M16 50 Q42 58 69 50 C71 51 68 75 42.500 75 C17 75 14 51 16 50Z" fill="#35333e" />
          <path d="M20 54.500 Q42 60.500 65 54.500 L62 60.500 Q42 65.500 23 60.500Z" fill="#fff" />
        </svg>
        <svg className="h-[90px] w-[58px]" viewBox="0 0 58 90" fill="none" stroke="#fff" strokeWidth="4.400" strokeLinecap="round">
          <rect x="16" y="3" width="26" height="54" rx="13" fill="#fff" stroke="none" />
          <path d="M3 36 V44 C3 60 13 70 29 70 C45 70 55 60 55 44 V36 M29 70 V84 M10 84.500 H48" />
        </svg>
      </div>
      <div className="ml-[425px] mt-[38px] h-[15px] w-[471px] rounded-full bg-white" />
    </section>
  );
}

export default function App() {
  return (
    <main className="h-[2868px] w-[1320px] overflow-hidden bg-[#1a1c25] [font-family:Inter,sans-serif]">
      <StatusBar />
      <Toolbar />
      <MessagePanel />
      <LiftMap />
      <PanelFooter />
      <AccessoryBar />
      <Keyboard />
    </main>
  );
}
